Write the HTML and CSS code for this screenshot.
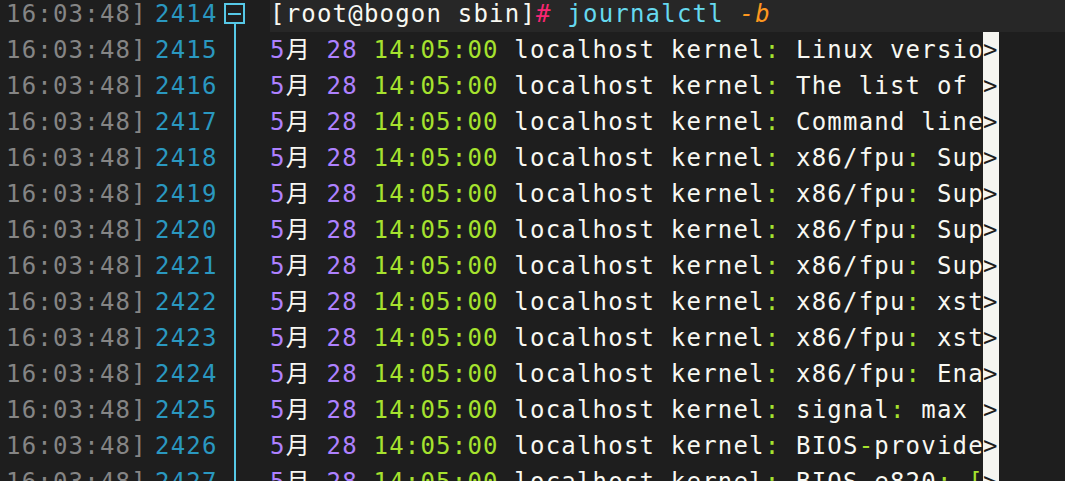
FILE: index.html
```html
<!DOCTYPE html>
<html>
<head>
<meta charset="utf-8">
<link rel="stylesheet" href="styles.css">
</head>
<body>
<div class="term">
  <div class="row cmd">
    <span class="ts">16:03:48]</span><span class="ln">2414</span>
    <div class="fold first"><span class="box"><span class="minus"></span></span><span class="guide"></span></div>
    <div class="text cmdline"><span class="w">[root@bogon sbin]</span><span class="hash">#</span> <span class="c">journalctl</span> <span class="opt">-b</span></div>
  </div>
  <div class="row"><span class="ts">16:03:48]</span><span class="ln">2415</span><div class="fold"><span class="guide"></span></div><div class="text"><span class="p">5</span><span class="w">月</span> <span class="p">28</span> <span class="g">14:05:00</span> <span class="w">localhost kernel</span><span class="g">:</span> <span class="w">Linux versio</span></div><div class="strip">&gt;</div></div>
  <div class="row"><span class="ts">16:03:48]</span><span class="ln">2416</span><div class="fold"><span class="guide"></span></div><div class="text"><span class="p">5</span><span class="w">月</span> <span class="p">28</span> <span class="g">14:05:00</span> <span class="w">localhost kernel</span><span class="g">:</span> <span class="w">The list of </span></div><div class="strip">&gt;</div></div>
  <div class="row"><span class="ts">16:03:48]</span><span class="ln">2417</span><div class="fold"><span class="guide"></span></div><div class="text"><span class="p">5</span><span class="w">月</span> <span class="p">28</span> <span class="g">14:05:00</span> <span class="w">localhost kernel</span><span class="g">:</span> <span class="w">Command line</span></div><div class="strip">&gt;</div></div>
  <div class="row"><span class="ts">16:03:48]</span><span class="ln">2418</span><div class="fold"><span class="guide"></span></div><div class="text"><span class="p">5</span><span class="w">月</span> <span class="p">28</span> <span class="g">14:05:00</span> <span class="w">localhost kernel</span><span class="g">:</span> <span class="w">x86/fpu</span><span class="g">:</span> <span class="w">Sup</span></div><div class="strip">&gt;</div></div>
  <div class="row"><span class="ts">16:03:48]</span><span class="ln">2419</span><div class="fold"><span class="guide"></span></div><div class="text"><span class="p">5</span><span class="w">月</span> <span class="p">28</span> <span class="g">14:05:00</span> <span class="w">localhost kernel</span><span class="g">:</span> <span class="w">x86/fpu</span><span class="g">:</span> <span class="w">Sup</span></div><div class="strip">&gt;</div></div>
  <div class="row"><span class="ts">16:03:48]</span><span class="ln">2420</span><div class="fold"><span class="guide"></span></div><div class="text"><span class="p">5</span><span class="w">月</span> <span class="p">28</span> <span class="g">14:05:00</span> <span class="w">localhost kernel</span><span class="g">:</span> <span class="w">x86/fpu</span><span class="g">:</span> <span class="w">Sup</span></div><div class="strip">&gt;</div></div>
  <div class="row"><span class="ts">16:03:48]</span><span class="ln">2421</span><div class="fold"><span class="guide"></span></div><div class="text"><span class="p">5</span><span class="w">月</span> <span class="p">28</span> <span class="g">14:05:00</span> <span class="w">localhost kernel</span><span class="g">:</span> <span class="w">x86/fpu</span><span class="g">:</span> <span class="w">Sup</span></div><div class="strip">&gt;</div></div>
  <div class="row"><span class="ts">16:03:48]</span><span class="ln">2422</span><div class="fold"><span class="guide"></span></div><div class="text"><span class="p">5</span><span class="w">月</span> <span class="p">28</span> <span class="g">14:05:00</span> <span class="w">localhost kernel</span><span class="g">:</span> <span class="w">x86/fpu</span><span class="g">:</span> <span class="w">xst</span></div><div class="strip">&gt;</div></div>
  <div class="row"><span class="ts">16:03:48]</span><span class="ln">2423</span><div class="fold"><span class="guide"></span></div><div class="text"><span class="p">5</span><span class="w">月</span> <span class="p">28</span> <span class="g">14:05:00</span> <span class="w">localhost kernel</span><span class="g">:</span> <span class="w">x86/fpu</span><span class="g">:</span> <span class="w">xst</span></div><div class="strip">&gt;</div></div>
  <div class="row"><span class="ts">16:03:48]</span><span class="ln">2424</span><div class="fold"><span class="guide"></span></div><div class="text"><span class="p">5</span><span class="w">月</span> <span class="p">28</span> <span class="g">14:05:00</span> <span class="w">localhost kernel</span><span class="g">:</span> <span class="w">x86/fpu</span><span class="g">:</span> <span class="w">Ena</span></div><div class="strip">&gt;</div></div>
  <div class="row"><span class="ts">16:03:48]</span><span class="ln">2425</span><div class="fold"><span class="guide"></span></div><div class="text"><span class="p">5</span><span class="w">月</span> <span class="p">28</span> <span class="g">14:05:00</span> <span class="w">localhost kernel</span><span class="g">:</span> <span class="w">signal</span><span class="g">:</span> <span class="w">max </span></div><div class="strip">&gt;</div></div>
  <div class="row"><span class="ts">16:03:48]</span><span class="ln">2426</span><div class="fold"><span class="guide"></span></div><div class="text"><span class="p">5</span><span class="w">月</span> <span class="p">28</span> <span class="g">14:05:00</span> <span class="w">localhost kernel</span><span class="g">:</span> <span class="w">BIOS</span><span class="g">-</span><span class="w">provide</span></div><div class="strip">&gt;</div></div>
  <div class="row"><span class="ts">16:03:48]</span><span class="ln">2427</span><div class="fold"><span class="guide"></span></div><div class="text"><span class="p">5</span><span class="w">月</span> <span class="p">28</span> <span class="g">14:05:00</span> <span class="w">localhost kernel</span><span class="g">:</span> <span class="w">BIOS</span><span class="g">-</span><span class="w">e820</span><span class="g">:</span> <span class="g">[</span></div><div class="strip">&gt;</div></div>
</div>
</body>
</html>
```
FILE: styles.css
```css
html, body {
  margin: 0;
  padding: 0;
  background: #1e1e1e;
  overflow: hidden;
  height: 481px;
}
.term {
  margin-top: -4px;
  font-family: "DejaVu Sans Mono", "Noto Sans CJK SC", monospace;
  font-size: 24px;
  letter-spacing: 1.2px;
  color: #f8f8f2;
}
.row {
  display: flex;
  align-items: stretch;
  height: 36px;
  line-height: 36px;
  white-space: pre;
}
.ts {
  box-sizing: border-box;
  width: 155px;
  padding-left: 6px;
  color: #858585;
}
.ln {
  width: 62px;
  color: #2a98c0;
}
.fold {
  width: 53px;
  display: flex;
  flex-direction: column;
  padding-left: 17px;
  box-sizing: border-box;
}
.fold.first {
  padding-left: 7px;
  padding-top: 7px;
}
.box {
  box-sizing: border-box;
  width: 21px;
  height: 21px;
  border: 2px solid #56c8e6;
  display: flex;
  align-items: center;
  justify-content: center;
}
.minus {
  width: 13px;
  height: 2px;
  background: #56c8e6;
}
.guide {
  flex: 1;
  width: 2px;
  background: #56c8e6;
}
.fold.first .guide {
  margin-left: 10px;
}
.text {
  width: 713px;
  overflow: hidden;
}
.cmdline {
  flex: 1;
  background: #272727;
}
.strip {
  width: 15.5px;
  background: #f5f5f0;
  color: #1e1e1e;
  overflow: hidden;
}
.w { color: #f8f8f2; }
.p { color: #ae81ff; }
.g { color: #a6e22e; }
.hash { color: #f92672; }
.c { color: #66d9ef; }
.opt { color: #fd971f; font-style: italic; }
```
